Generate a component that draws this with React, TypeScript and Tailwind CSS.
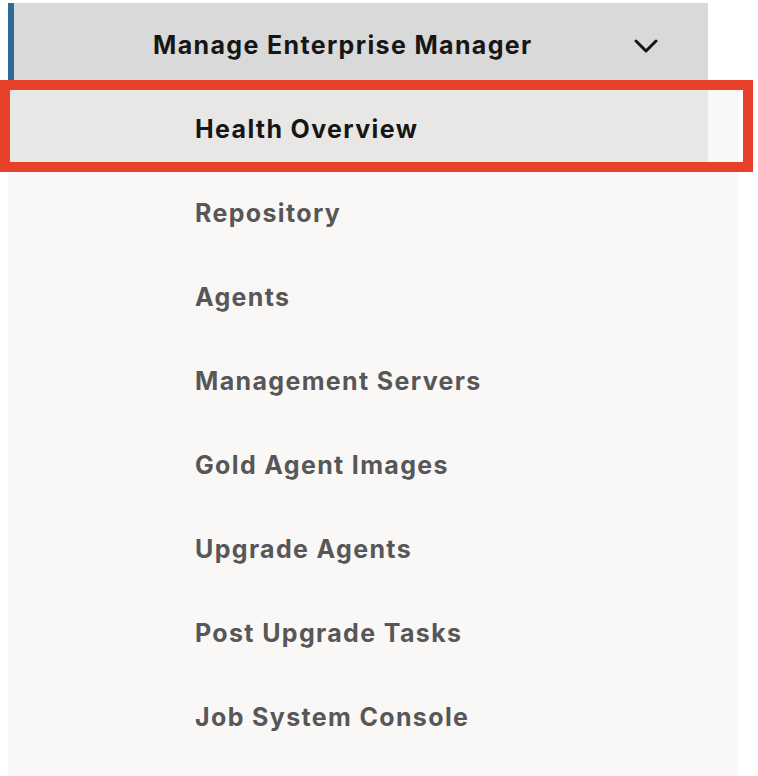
import React from "react";

const items = [
  "Repository",
  "Agents",
  "Management Servers",
  "Gold Agent Images",
  "Upgrade Agents",
  "Post Upgrade Tasks",
  "Job System Console",
];

export default function App() {
  return (
    <div className="relative h-[776px] w-[758px] overflow-hidden bg-white font-['Inter',sans-serif]">
      {/* Section header */}
      <div className="ml-2 mt-[3px] flex h-[84px] w-[700px] items-center justify-between border-l-[6px] border-[#2e6b96] bg-[#d9d9d9] pl-[139px] pr-[50px] pt-[2px]">
        <span className="text-[25px] font-bold tracking-[1.35px] text-[#161616]">
          Manage Enterprise Manager
        </span>
        <svg width="24" height="14" viewBox="0 0 24 14" fill="none">
          <path d="M2 2l10 10L22 2" stroke="#161616" strokeWidth="3" strokeLinecap="round" strokeLinejoin="round" />
        </svg>
      </div>

      {/* Sub items */}
      <div className="ml-2 w-[730px] bg-[#f9f8f7] pb-10">
        <div className="flex h-[84px] w-[700px] items-center bg-[#e8e7e5] pl-[187px] pt-[2px]">
          <span className="text-[25px] font-bold tracking-[1.35px] text-[#161616]">Health Overview</span>
        </div>
        {items.map((item) => (
          <div key={item} className="flex h-[84px] items-center pl-[187px] pt-[2px]">
            <span className="text-[25px] font-bold tracking-[1.35px] text-[#575757]">{item}</span>
          </div>
        ))}
      </div>

      {/* Highlight annotation */}
      <div className="absolute left-0 top-[80px] h-[92px] w-[753px] border-[10px] border-[#e8412a]" />
    </div>
  );
}
